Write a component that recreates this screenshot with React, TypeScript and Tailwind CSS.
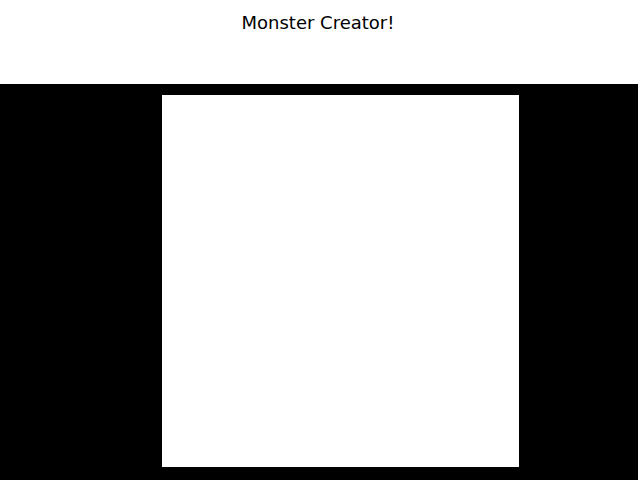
export default function App() {
  return (
    <div className="w-[638px] bg-white" style={{ fontFamily: '"DejaVu Sans", sans-serif' }}>
      <div className="h-[84px] flex justify-center pt-[12px] pr-[2px]">
        <h1 className="text-[18px] leading-[22px] text-black">Monster Creator!</h1>
      </div>
      <div className="h-[396px] bg-black pl-[162px] pt-[11px]">
        <div className="w-[357px] h-[372px] bg-white" />
      </div>
    </div>
  );
}
